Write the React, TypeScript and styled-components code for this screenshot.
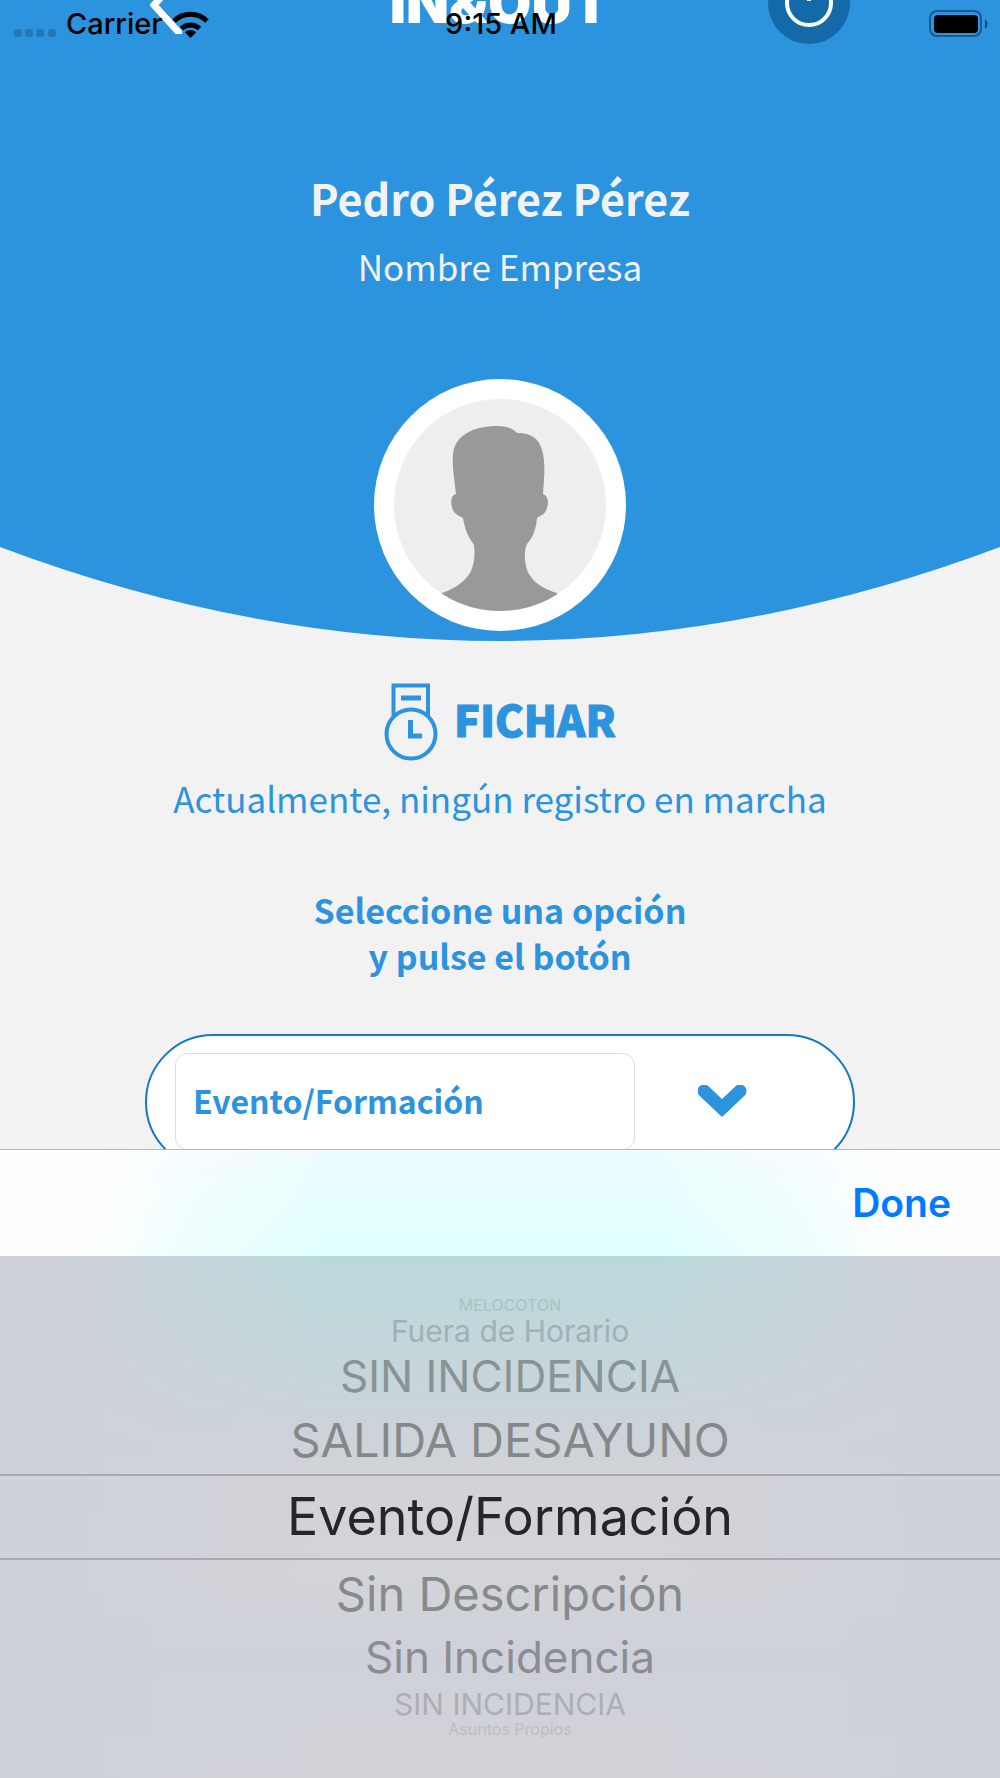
import React, { useState } from "react";
import styled, { createGlobalStyle } from "styled-components";

const brand = "#2c93df";
const brandFont = `"Noto Sans CJK JP", "Open Sans", sans-serif`;
const systemFont = `Inter, "Liberation Sans", sans-serif`;

const GlobalStyle = createGlobalStyle`
  *, *::before, *::after { box-sizing: border-box; }
  html, body, #root { height: 100%; margin: 0; }
  body { background: #f2f2f2; font-family: ${brandFont}; color: ${brand}; overflow: hidden; }
  h1, h2, p { margin: 0; }
  button, select { font: inherit; border: 0; background: none; padding: 0; margin: 0; }
`;

const Screen = styled.div`
  position: relative;
  display: flex;
  flex-direction: column;
  height: 100%;
  overflow: hidden;
`;

const StatusBar = styled.div`
  position: absolute;
  inset: 0 0 auto;
  z-index: 2;
  display: grid;
  grid-template-columns: 1fr auto 1fr;
  align-items: center;
  height: 48px;
  padding: 0 12px 0 14px;
  font: 500 29px/48px ${systemFont};
  color: #000;
`;

const Carrier = styled.div`
  display: flex;
  align-items: center;
  gap: 10px;
`;

const SignalDots = styled.svg`
  margin-top: 18px;
  fill: #2576b3;
`;

const BatteryIcon = styled.svg`
  justify-self: end;
`;

const Content = styled.main`
  flex: 1;
  min-height: 0;
  overflow: hidden;
`;

const Hero = styled.header`
  position: relative;
  display: flex;
  flex-direction: column;
  align-items: center;
  padding-bottom: 10px;
`;

const HeroCurve = styled.svg`
  position: absolute;
  inset: 0;
  z-index: -1;
  width: 100%;
  height: 100%;
`;

const TopBar = styled.div`
  display: grid;
  grid-template-columns: 1fr auto 1fr;
  grid-template-rows: 44px;
  align-items: end;
  width: 100%;
  padding: 0 150px;
`;

const BackButton = styled.button`
  display: flex;
  justify-self: start;
  padding-bottom: 10px;
`;

const Logo = styled.strong`
  padding-bottom: 13px;
  font: 900 56px/56px ${systemFont};
  color: #fff;
`;

const ClockButton = styled.button`
  display: flex;
  justify-self: end;
`;

const UserName = styled.h1`
  margin-top: 117px;
  font-size: 43px;
  line-height: 72px;
  font-weight: 700;
  color: #f2f2f2;
`;

const Company = styled.p`
  font-size: 35px;
  line-height: 66px;
  color: #f2f2f2;
`;

const Avatar = styled.svg`
  margin-top: 80px;
`;

const Heading = styled.div`
  display: flex;
  justify-content: center;
  align-items: center;
  gap: 16px;
  margin-top: 42px;
`;

const Title = styled.h2`
  padding-bottom: 8px;
  font-size: 43px;
  line-height: 64px;
  font-weight: 900;
  -webkit-text-stroke: 1px ${brand};
`;

const Status = styled.p`
  margin-top: 4px;
  font-size: 35px;
  line-height: 66px;
  text-align: center;
`;

const Prompt = styled.p`
  margin-top: 56px;
  font-size: 34px;
  line-height: 46px;
  font-weight: 700;
  text-align: center;
`;

const SelectPill = styled.label`
  display: flex;
  align-items: flex-start;
  width: 71%;
  height: 136px;
  margin: 55px auto 0;
  padding: 17px 28px;
  border: 2px solid #1378c6;
  border-radius: 68px;
  background: #fff;
`;

const OptionSelect = styled.select`
  flex: 0 0 460px;
  height: 97px;
  padding: 0 17px 4px;
  border: 1px solid #dcdcdc;
  border-radius: 12px;
  appearance: none;
  font-size: 32px;
  font-weight: 700;
  color: ${brand};
`;

const Chevron = styled.svg`
  margin: 32px 0 0 63px;
`;

const Sheet = styled.section`
  flex: 0 0 auto;
`;

const Toolbar = styled.div`
  display: flex;
  justify-content: flex-end;
  align-items: center;
  height: 107px;
  padding-right: 49px;
  border-top: 1px solid #b4b6b8;
  background:
    linear-gradient(90deg, #fefefe 8%, rgba(254, 254, 254, 0) 32%, rgba(254, 254, 254, 0) 66%, #fefefe 92%),
    linear-gradient(#effcff, #e6fffe 50%, #dffffe);
`;

const DoneButton = styled.button`
  && { font: 600 39px/60px ${systemFont}; }
  color: #007aff;
`;

const Wheel = styled.div`
  display: flex;
  flex-direction: column;
  height: 522px;
  padding-top: 39px;
  background:
    linear-gradient(90deg, #ced1d8 6%, rgba(206, 209, 216, 0) 32%, rgba(206, 209, 216, 0) 66%, #ced1d8 94%),
    linear-gradient(#b9d8da, #c2d7db 80px, #cbd3da 160px, #d1d3d8 220px, #d2d4d8 320px, #cfd1da 400px, #d1d3d8);
`;

const Row = styled.button<{ $size: number; $height: number; $tone: string; $selected?: boolean }>`
  && { font: 400 ${(p) => p.$size}px/1 ${systemFont}; }
  flex: 0 0 ${(p) => p.$height}px;
  padding-left: 20px;
  border: solid #a7a9ad;
  border-width: ${(p) => (p.$selected ? "2px 0" : "0")};
  color: ${(p) => p.$tone};
`;

const rows = [
  { text: "MELOCOTON", size: 16, height: 20, tone: "#a9c2c5" },
  { text: "Fuera de Horario", size: 30, height: 32, tone: "#a0b1b5" },
  { text: "SIN INCIDENCIA", size: 44, height: 58, tone: "#889394" },
  { text: "SALIDA DESAYUNO", size: 47, height: 69, tone: "#85888b" },
  { text: "Evento/Formación", size: 52, height: 86, tone: "#262626" },
  { text: "Sin Descripción", size: 47, height: 66, tone: "#88898d" },
  { text: "Sin Incidencia", size: 44, height: 62, tone: "#8b8d92" },
  { text: "SIN INCIDENCIA", size: 30, height: 32, tone: "#adaeb3" },
  { text: "Asuntos Propios", size: 16, height: 18, tone: "#bcbdc2" },
];

export default function App() {
  const [selected, setSelected] = useState("Evento/Formación");
  const options = Array.from(new Set(rows.map((r) => r.text)));

  return (
    <>
      <GlobalStyle />
      <Screen>
        <StatusBar>
          <Carrier>
            <SignalDots width="42" height="8" viewBox="0 0 42 8" aria-hidden="true">
              {[0, 11, 22, 34].map((x) => (
                <rect key={x} x={x} y="0" width="8" height="8" rx="3" />
              ))}
            </SignalDots>
            Carrier
            <svg width="37" height="27" viewBox="0 0 37 27" aria-label="Wi-Fi">
              <path d="M18.500 27 L12.800 21.300 A8 8 0 0 1 24.200 21.300 Z" />
              <path d="M9.500 17.500 A13 13 0 0 1 27.500 17.500" fill="none" stroke="#000" strokeWidth="5" />
              <path d="M2 10 A23.500 23.500 0 0 1 35 10" fill="none" stroke="#000" strokeWidth="5" />
            </svg>
          </Carrier>
          <span>9:15 AM</span>
          <BatteryIcon width="59" height="28" viewBox="0 0 59 28" aria-label="Battery">
            <rect x="1" y="1" width="51" height="25" rx="7" fill="none" stroke="#1b5b8b" strokeWidth="2" />
            <rect x="5" y="5" width="44" height="18" rx="4" />
            <path d="M56 9 Q61 14 56 19 Z" fill="#1b4a6d" />
          </BatteryIcon>
        </StatusBar>

        <Content>
          <Hero>
            <HeroCurve viewBox="0 0 1000 641" preserveAspectRatio="none" aria-hidden="true">
              <path d="M0 0 H1000 V547 Q500 735 0 547 Z" fill={brand} />
            </HeroCurve>
            <TopBar>
              <BackButton aria-label="Volver">
                <svg width="32" height="60" viewBox="0 0 32 60" fill="none" stroke="#fff" strokeWidth="7">
                  <path d="M31 1 L4 31 L32 62" />
                </svg>
              </BackButton>
              <Logo>IN&amp;OUT</Logo>
              <ClockButton aria-label="Registro">
                <svg width="82" height="82" viewBox="0 0 82 82" fill="none">
                  <circle cx="41" cy="41" r="41" fill="#1469a9" />
                  <circle cx="41" cy="41" r="22" stroke="#fff" strokeWidth="4" />
                  <path d="M41 26 V39" stroke="#fff" strokeWidth="4" />
                </svg>
              </ClockButton>
            </TopBar>
            <UserName>Pedro Pérez Pérez</UserName>
            <Company>Nombre Empresa</Company>
            <Avatar width="252" height="252" viewBox="0 0 252 252" aria-label="Foto de perfil">
              <defs>
                <clipPath id="portrait">
                  <circle cx="126" cy="126" r="106" />
                </clipPath>
              </defs>
              <circle cx="126" cy="126" r="126" fill="#fff" />
              <circle cx="126" cy="126" r="106" fill="#eee" />
              <path
                clipPath="url(#portrait)"
                fill="#999"
                d="M82 115 C80 98 78 85 79 75 C81 56 100 47 123 47 C133 47 139 50 143 54 C158 54 165 60 168 71 C172 84 170 99 169 115 C174 117 175 123 173 129 C171 136 167 136 163 139 C162 149 160 157 153 165 C149 174 151 188 155 195 C161 205 170 210 183 214 V252 H68 V214 C81 210 91 202 96 194 C101 184 101 174 100 166 C94 157 91 151 89 139 C83 136 79 134 78 128 C76 121 78 116 82 115 Z"
              />
            </Avatar>
          </Hero>

          <Heading>
            <svg width="54" height="78" viewBox="0 0 54 78" fill="none" stroke={brand} strokeWidth="4" aria-hidden="true">
              <path d="M9.500 33 V2.500 H44 V33" />
              <path d="M17 15 H37" strokeWidth="5" />
              <circle cx="27" cy="51" r="24.500" />
              <path d="M26.500 37 V53 H38" strokeWidth="5" />
            </svg>
            <Title>FICHAR</Title>
          </Heading>
          <Status>Actualmente, ningún registro en marcha</Status>
          <Prompt>
            Seleccione una opción
            <br />y pulse el botón
          </Prompt>
          <SelectPill>
            <OptionSelect aria-label="Opción" value={selected} onChange={(e) => setSelected(e.target.value)}>
              {options.map((o) => (
                <option key={o}>{o}</option>
              ))}
            </OptionSelect>
            <Chevron width="50" height="34" viewBox="0 0 50 34" fill="none" aria-hidden="true">
              <path d="M6 6 L24 23 L42 6" stroke={brand} strokeWidth="13" strokeLinecap="round" />
            </Chevron>
          </SelectPill>
        </Content>

        <Sheet>
          <Toolbar>
            <DoneButton>Done</DoneButton>
          </Toolbar>
          <Wheel>
            {rows.map((r, i) => (
              <Row
                key={i}
                $size={r.size}
                $height={r.height}
                $tone={r.tone}
                $selected={i === 4}
                onClick={() => setSelected(r.text)}
              >
                {r.text}
              </Row>
            ))}
          </Wheel>
        </Sheet>
      </Screen>
    </>
  );
}
